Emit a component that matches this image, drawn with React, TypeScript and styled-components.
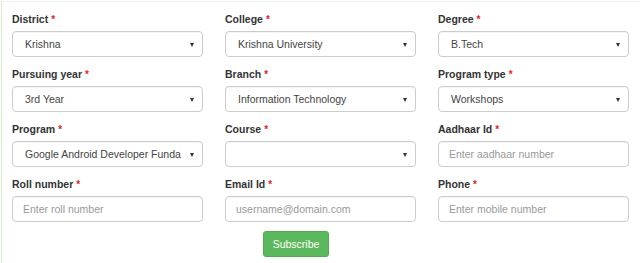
import React from 'react';
import styled, { createGlobalStyle } from 'styled-components';

const GlobalStyle = createGlobalStyle`
  html, body {
    margin: 0;
    padding: 0;
    background: #fff;
  }
  body {
    font-family: "Liberation Sans", Arial, sans-serif;
    color: #333;
  }
`;

const Panel = styled.div`
  margin: 1px 0 0 1px;
  height: 262px;
  box-sizing: border-box;
  border-left: 1px solid #d3edc4;
  border-top: 1px solid #f0f0f0;
  padding: 10px 10px 0 10px;
`;

const FormGrid = styled.div`
  display: grid;
  grid-template-columns: repeat(3, 191px);
  column-gap: 22px;
  row-gap: 10px;
`;

const Field = styled.div`
  display: flex;
  flex-direction: column;
  gap: 5px;
`;

const Label = styled.label`
  font-size: 10.5px;
  font-weight: bold;
  line-height: 14px;
  height: 14px;
  color: #333;
`;

const Required = styled.span`
  color: #e02424;
  margin-left: 3px;
  font-size: 10px;
`;

const SelectBox = styled.div`
  position: relative;
  height: 26px;
  box-sizing: border-box;
  border: 1px solid #ccc;
  border-radius: 4px;
  display: flex;
  align-items: center;
  padding: 0 24px 0 12px;
  font-size: 10.5px;
  color: #444;
  white-space: nowrap;
  overflow: hidden;
  box-shadow: inset 0 1px 1px rgba(0, 0, 0, 0.04);
`;

const Caret = styled.span`
  position: absolute;
  right: 8px;
  top: 11px;
  width: 0;
  height: 0;
  border-left: 2.5px solid transparent;
  border-right: 2.5px solid transparent;
  border-top: 4px solid #333;
`;

const TextInput = styled.input`
  height: 26px;
  box-sizing: border-box;
  border: 1px solid #ccc;
  border-radius: 4px;
  padding: 0 10px;
  font-family: "Liberation Sans", Arial, sans-serif;
  font-size: 10.5px;
  color: #444;
  outline: none;
  width: 100%;
  box-shadow: inset 0 1px 1px rgba(0, 0, 0, 0.04);

  &::placeholder {
    color: #999;
  }
`;

const Actions = styled.div`
  padding: 9px 0 0 251px;
`;

const SubmitButton = styled.button`
  width: 66px;
  height: 26px;
  background: #5cb85c;
  border: 1px solid #4cae4c;
  border-radius: 3px;
  color: #fff;
  font-family: "Liberation Sans", Arial, sans-serif;
  font-size: 10.5px;
  padding: 0;
`;

type FieldDef =
  | { label: string; kind: 'select'; value: string }
  | { label: string; kind: 'input'; placeholder: string };

const fields: FieldDef[] = [
  { label: 'District', kind: 'select', value: 'Krishna' },
  { label: 'College', kind: 'select', value: 'Krishna University' },
  { label: 'Degree', kind: 'select', value: 'B.Tech' },
  { label: 'Pursuing year', kind: 'select', value: '3rd Year' },
  { label: 'Branch', kind: 'select', value: 'Information Technology' },
  { label: 'Program type', kind: 'select', value: 'Workshops' },
  { label: 'Program', kind: 'select', value: 'Google Android Developer Funda' },
  { label: 'Course', kind: 'select', value: '' },
  { label: 'Aadhaar Id', kind: 'input', placeholder: 'Enter aadhaar number' },
  { label: 'Roll number', kind: 'input', placeholder: 'Enter roll number' },
  { label: 'Email Id', kind: 'input', placeholder: 'username@domain.com' },
  { label: 'Phone', kind: 'input', placeholder: 'Enter mobile number' },
];

export default function App() {
  return (
    <>
      <GlobalStyle />
      <Panel>
        <FormGrid>
          {fields.map((f) => (
            <Field key={f.label}>
              <Label>
                {f.label}
                <Required>*</Required>
              </Label>
              {f.kind === 'select' ? (
                <SelectBox>
                  {f.value}
                  <Caret />
                </SelectBox>
              ) : (
                <TextInput placeholder={f.placeholder} />
              )}
            </Field>
          ))}
        </FormGrid>
        <Actions>
          <SubmitButton>Subscribe</SubmitButton>
        </Actions>
      </Panel>
    </>
  );
}
